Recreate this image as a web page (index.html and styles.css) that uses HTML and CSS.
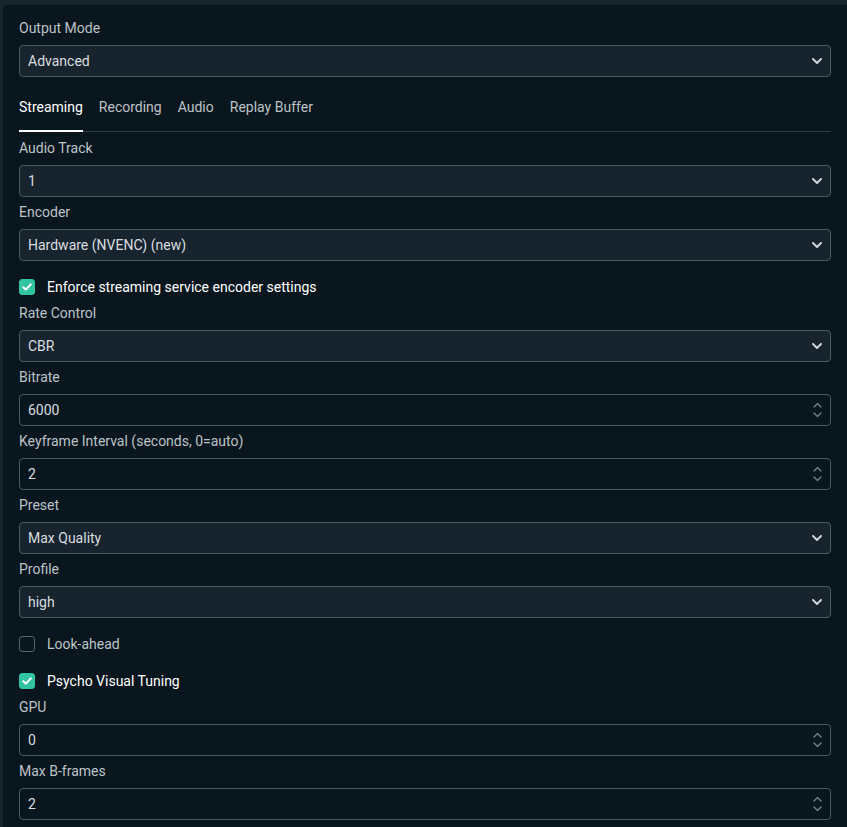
FILE: index.html
```html
<!DOCTYPE html>
<html>
<head>
<meta charset="utf-8">
<link rel="stylesheet" href="styles.css">
</head>
<body>
<div class="frame">
  <div class="panel">
    <div class="field first">
      <div class="label">Output Mode</div>
      <div class="select"><span>Advanced</span><svg class="chev" width="10" height="6" viewBox="0 0 10 6"><polyline points="1,1 5,5 9,1"/></svg></div>
    </div>

    <div class="tabs">
      <div class="tab active">Streaming</div>
      <div class="tab">Recording</div>
      <div class="tab">Audio</div>
      <div class="tab">Replay Buffer</div>
    </div>

    <div class="field after-tabs">
      <div class="label">Audio Track</div>
      <div class="select"><span>1</span><svg class="chev" width="10" height="6" viewBox="0 0 10 6"><polyline points="1,1 5,5 9,1"/></svg></div>
    </div>
    <div class="field">
      <div class="label">Encoder</div>
      <div class="select"><span>Hardware (NVENC) (new)</span><svg class="chev" width="10" height="6" viewBox="0 0 10 6"><polyline points="1,1 5,5 9,1"/></svg></div>
    </div>

    <div class="check checked first-check">
      <span class="box"><svg width="10" height="8" viewBox="0 0 10 8"><polyline points="1.2,4.2 3.8,6.6 8.8,1.4"/></svg></span>
      <span class="ctext">Enforce streaming service encoder settings</span>
    </div>

    <div class="field after-check">
      <div class="label">Rate Control</div>
      <div class="select"><span>CBR</span><svg class="chev" width="10" height="6" viewBox="0 0 10 6"><polyline points="1,1 5,5 9,1"/></svg></div>
    </div>
    <div class="field">
      <div class="label">Bitrate</div>
      <div class="number"><span>6000</span><span class="spin"><svg width="9" height="6" viewBox="0 0 9 6"><polyline points="1,5 4.5,1.5 8,5"/></svg><svg width="9" height="6" viewBox="0 0 9 6"><polyline points="1,1 4.5,4.5 8,1"/></svg></span></div>
    </div>
    <div class="field">
      <div class="label">Keyframe Interval (seconds, 0=auto)</div>
      <div class="number"><span>2</span><span class="spin"><svg width="9" height="6" viewBox="0 0 9 6"><polyline points="1,5 4.5,1.5 8,5"/></svg><svg width="9" height="6" viewBox="0 0 9 6"><polyline points="1,1 4.5,4.5 8,1"/></svg></span></div>
    </div>
    <div class="field">
      <div class="label">Preset</div>
      <div class="select"><span>Max Quality</span><svg class="chev" width="10" height="6" viewBox="0 0 10 6"><polyline points="1,1 5,5 9,1"/></svg></div>
    </div>
    <div class="field">
      <div class="label">Profile</div>
      <div class="select"><span>high</span><svg class="chev" width="10" height="6" viewBox="0 0 10 6"><polyline points="1,1 5,5 9,1"/></svg></div>
    </div>

    <div class="check first-check">
      <span class="box"></span>
      <span class="ctext">Look-ahead</span>
    </div>
    <div class="check checked second-check">
      <span class="box"><svg width="10" height="8" viewBox="0 0 10 8"><polyline points="1.2,4.2 3.8,6.6 8.8,1.4"/></svg></span>
      <span class="ctext">Psycho Visual Tuning</span>
    </div>

    <div class="field after-check">
      <div class="label">GPU</div>
      <div class="number"><span>0</span><span class="spin"><svg width="9" height="6" viewBox="0 0 9 6"><polyline points="1,5 4.5,1.5 8,5"/></svg><svg width="9" height="6" viewBox="0 0 9 6"><polyline points="1,1 4.5,4.5 8,1"/></svg></span></div>
    </div>
    <div class="field">
      <div class="label">Max B-frames</div>
      <div class="number"><span>2</span><span class="spin"><svg width="9" height="6" viewBox="0 0 9 6"><polyline points="1,5 4.5,1.5 8,5"/></svg><svg width="9" height="6" viewBox="0 0 9 6"><polyline points="1,1 4.5,4.5 8,1"/></svg></span></div>
    </div>
  </div>
</div>
</body>
</html>
```

FILE: styles.css
```css
* { box-sizing: border-box; }
html, body {
  margin: 0;
  padding: 0;
  height: 100%;
  overflow: hidden;
  background: #17242d;
}
body {
  font-family: Roboto, "Liberation Sans", sans-serif;
  font-size: 14px;
}
.frame {
  padding: 5px 0 0 3px;
  height: 100%;
}
.panel {
  background: #09161e;
  border-top-left-radius: 4px;
  height: 100%;
  padding: 14px 16px 0 16px;
  display: flex;
  flex-direction: column;
}
.field {
  display: flex;
  flex-direction: column;
  margin-top: 6px;
}
.field.first { margin-top: 0; }
.field.after-tabs { margin-top: 7px; }
.field.after-check { margin-top: 9px; }
.label {
  line-height: 18px;
  height: 18px;
  color: #bdc3c7;
  margin-bottom: 8px;
}
.select, .number {
  height: 32px;
  border: 1px solid #4c5a61;
  border-radius: 4px;
  display: flex;
  align-items: center;
  justify-content: space-between;
  padding: 0 8px 0 8px;
  color: #d9dde0;
  line-height: 20px;
}
.select { background: #17242d; }
.number { background: #09161e; }
.chev {
  fill: none;
  stroke: #cdd2d5;
  stroke-width: 2;
  stroke-linecap: round;
  stroke-linejoin: round;
}
.spin {
  display: flex;
  flex-direction: column;
  gap: 4px;
}
.spin svg {
  fill: none;
  stroke: #76838a;
  stroke-width: 1.3;
  stroke-linecap: round;
  stroke-linejoin: round;
  display: block;
}
.tabs {
  display: flex;
  gap: 16px;
  margin-top: 20px;
  border-bottom: 1px solid #2f3c43;
}
.tab {
  line-height: 20px;
  padding-bottom: 14px;
  color: #bdc3c7;
}
.tab.active {
  color: #ffffff;
  border-bottom: 2px solid #ffffff;
  padding-bottom: 13px;
  margin-bottom: -1px;
}
.check {
  display: flex;
  align-items: center;
  height: 16px;
  gap: 12px;
}
.check.first-check { margin-top: 18px; }
.check.second-check { margin-top: 21px; }
.box {
  width: 16px;
  height: 16px;
  border: 1px solid #56636a;
  border-radius: 3px;
  display: flex;
  align-items: center;
  justify-content: center;
  flex: none;
}
.check.checked .box {
  background: #31c3a2;
  border-color: #31c3a2;
}
.box svg {
  fill: none;
  stroke: #ffffff;
  stroke-width: 2;
  stroke-linecap: round;
  stroke-linejoin: round;
}
.ctext {
  color: #bdc3c7;
  line-height: 20px;
}
.check.checked .ctext { color: #ffffff; }
```
